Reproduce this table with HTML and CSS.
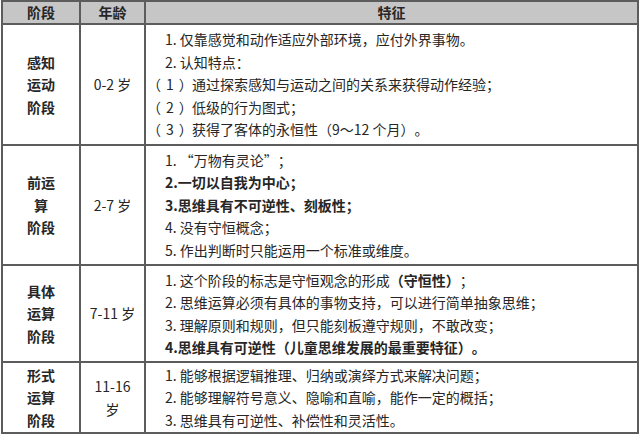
FILE: index.html
```html
<!DOCTYPE html>
<html lang="zh-CN">
<head>
<meta charset="utf-8">
<link rel="stylesheet" href="styles.css">
</head>
<body>
<table class="stages">
  <colgroup>
    <col class="c-stage">
    <col class="c-age">
    <col class="c-feat">
  </colgroup>
  <thead>
    <tr class="head">
      <th>阶段</th>
      <th>年龄</th>
      <th>特征</th>
    </tr>
  </thead>
  <tbody>
    <tr class="r1">
      <td class="stage">感知<br>运动<br>阶段</td>
      <td class="age">0-2 岁</td>
      <td class="feat">
        <div class="ln num">1. 仅靠感觉和动作适应外部环境，应付外界事物。</div>
        <div class="ln num">2. 认知特点：</div>
        <div class="ln par"><span class="pn">（<span class="pd">1</span>）</span>通过探索感知与运动之间的关系来获得动作经验；</div>
        <div class="ln par"><span class="pn">（<span class="pd">2</span>）</span>低级的行为图式；</div>
        <div class="ln par"><span class="pn">（<span class="pd">3</span>）</span>获得了客体的永恒性（9～12 个月）。</div>
      </td>
    </tr>
    <tr class="r2">
      <td class="stage">前运<br>算<br>阶段</td>
      <td class="age">2-7 岁</td>
      <td class="feat">
        <div class="ln num">1. “万物有灵论”；</div>
        <div class="ln num b">2.一切以自我为中心；</div>
        <div class="ln num b">3.思维具有不可逆性、刻板性；</div>
        <div class="ln num">4. 没有守恒概念；</div>
        <div class="ln num">5. 作出判断时只能运用一个标准或维度。</div>
      </td>
    </tr>
    <tr class="r3">
      <td class="stage">具体<br>运算<br>阶段</td>
      <td class="age">7-11 岁</td>
      <td class="feat">
        <div class="ln num">1. 这个阶段的标志是守恒观念的形成<b>（守恒性）</b>；</div>
        <div class="ln num">2. 思维运算必须有具体的事物支持，可以进行简单抽象思维；</div>
        <div class="ln num">3. 理解原则和规则，但只能刻板遵守规则，不敢改变；</div>
        <div class="ln num b">4.思维具有可逆性（儿童思维发展的最重要特征）。</div>
      </td>
    </tr>
    <tr class="r4">
      <td class="stage">形式<br>运算<br>阶段</td>
      <td class="age">11-16<br>岁</td>
      <td class="feat">
        <div class="ln num">1. 能够根据逻辑推理、归纳或演绎方式来解决问题；</div>
        <div class="ln num">2. 能够理解符号意义、隐喻和直喻，能作一定的概括；</div>
        <div class="ln num">3. 思维具有可逆性、补偿性和灵活性。</div>
      </td>
    </tr>
  </tbody>
</table>
</body>
</html>
```

FILE: styles.css
```css
html, body {
  margin: 0;
  padding: 0;
  background: #ffffff;
}

body {
  font-family: "Noto Sans CJK SC", "Noto Sans", sans-serif;
  font-size: 14px;
  color: #262626;
  text-spacing-trim: space-all;
}

.stages {
  margin: 0 0 0 1px;
  border-collapse: collapse;
  table-layout: fixed;
  width: 636px;
  border: 2px solid #5c5c5c;
}

.c-stage { width: 78px; }
.c-age { width: 65px; }
.c-feat { width: 493px; }

.stages th,
.stages td {
  border: 2px solid #5c5c5c;
  padding: 0;
  vertical-align: middle;
  line-height: 22.5px;
}

.head th {
  background: #c6c6c6;
  height: 21px;
  font-weight: bold;
  text-align: center;
  line-height: 21px;
}

.r1 { height: 121px; }
.r2 { height: 120px; }
.r3 { height: 97px; }
.r4 { height: 71px; }

.stage {
  text-align: center;
  font-weight: bold;
}

.age {
  text-align: center;
}

.feat {
  padding-left: 9px;
}

.ln {
  white-space: nowrap;
}

.num {
  padding-left: 19px;
}

.par {
  padding-left: 0;
}

.pn {
  display: inline-block;
  box-sizing: border-box;
  width: 46px;
  padding-left: 8px;
  white-space: nowrap;
  font-feature-settings: "halt" 1;
}

.pd {
  margin: 0 5px;
}

.b, .ln b {
  font-weight: bold;
}
```
